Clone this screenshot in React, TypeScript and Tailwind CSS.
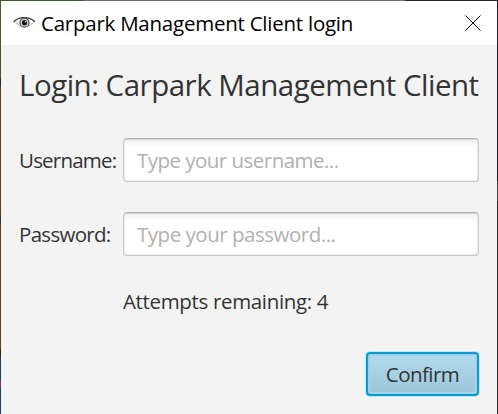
import React from "react";

const textFont = "font-['Open_Sans','Noto_Sans',sans-serif]";

function EyeIcon() {
  return (
    <svg className="block h-[16px] w-[22px]" viewBox="0 0 22 16" fill="none">
      <path d="M0.8 7C5.5 1.2 16.5 1.2 22 7" stroke="#3a3a3a" strokeWidth="1.4" />
      <path d="M3 7.8C5 9.6 6 10.6 7.6 11.2M15.4 11.2C17 10.6 18.2 9.6 19.8 7.8" stroke="#a0a0a0" strokeWidth="1" />
      <circle cx="11.5" cy="7.7" r="4.5" stroke="#4a4a4a" strokeWidth="1.2" fill="#d4d4d4" />
      <circle cx="11.5" cy="7.7" r="2.6" fill="#151515" />
      <circle cx="12.5" cy="6.8" r="0.8" fill="#eee" />
    </svg>
  );
}

function CloseIcon() {
  return (
    <svg className="-mt-px block size-4" viewBox="0 0 16 16" fill="none">
      <path d="M0.5 0.5L15.5 15.5M15.5 0.5L0.5 15.5" stroke="#000" strokeWidth="1" />
    </svg>
  );
}

function Field({ label, labelClass, type, placeholder, inputClass }: {
  label: string;
  labelClass: string;
  type: string;
  placeholder: string;
  inputClass: string;
}) {
  return (
    <label className="flex h-11 items-center">
      <span className={`w-[104px] shrink-0 whitespace-nowrap text-[20.5px] leading-[28px] ${labelClass}`}>{label}</span>
      <input
        type={type}
        placeholder={placeholder}
        className={`h-11 w-[356px] rounded-[4px] border border-[#c8c8c8] border-t-[#b5b5b5] bg-white bg-linear-to-b from-[#eeeeee] to-white to-[8px] px-[13px] text-[20.5px] text-[#333] shadow-[inset_0_1px_0_#d3d3d3,inset_0_0_0_1px_#ececec] outline-none placeholder:text-[#b0b0b0] ${inputClass}`}
      />
    </label>
  );
}

export default function App() {
  return (
    <div className={`flex h-[414px] w-[498px] flex-col overflow-hidden ${textFont}`}>
      <div className="h-px shrink-0 bg-[linear-gradient(90deg,#42592a_0_84px,#707070_84px_405px,#242428_405px)]" />
      <div className="flex min-h-0 flex-1">
        <div className="w-px shrink-0 bg-[linear-gradient(180deg,#42592a_0_77px,#292e32_77px_85px,#623816_85px_214px,#343033_214px_222px,#653c19_222px_348px,#2c2827_348px_356px,#27386b_356px_379px,#71334b_379px_387px,#27386b_387px)]" />
        <div className="flex flex-1 flex-col bg-[#f3f3f3]">
          <header className="flex h-11 items-center bg-white pl-3 pr-4">
            <EyeIcon />
            <h1 className="ml-[6px] flex-1 whitespace-nowrap text-[20.5px] leading-[28px] tracking-[-0.24px] text-black">
              Carpark Management Client login
            </h1>
            <CloseIcon />
          </header>
          <main className="flex flex-col pl-[18px] text-[#333]">
            <h2 className="mt-5 whitespace-nowrap text-[29.5px] leading-[40px] tracking-[-0.5px]">
              Login: Carpark Management Client
            </h2>
            <form className="mt-[33px] flex flex-col gap-[30px]">
              <Field label="Username:" labelClass="tracking-[-0.8px]" type="text" placeholder="Type your username..." inputClass="tracking-[-0.53px]" />
              <Field label="Password:" labelClass="tracking-[-0.7px]" type="password" placeholder="Type your password..." inputClass="tracking-[-0.48px]" />
            </form>
            <p className="ml-[104px] mt-[31px] whitespace-nowrap text-[20.5px] leading-[28px] tracking-[-0.34px]">
              Attempts remaining: 4
            </p>
            <button
              type="button"
              className="ml-[347px] mt-[37px] h-[44px] w-[113px] whitespace-nowrap rounded-[4px] border-2 border-[#039ed3] bg-linear-to-b from-[#b2dcee] to-[#9cc5d8] text-[20.5px] leading-[28px] tracking-[-0.55px] shadow-[0_0_0_1px_#c4e5f0,inset_0_0_0_1px_#9bd1e7,inset_0_0_0_2px_#a9d2e4]"
            >
              Confirm
            </button>
          </main>
        </div>
        <div className="w-px shrink-0 bg-[linear-gradient(180deg,#202024_0_180px,#484848_180px_200px,#303030_200px)]" />
      </div>
    </div>
  );
}
